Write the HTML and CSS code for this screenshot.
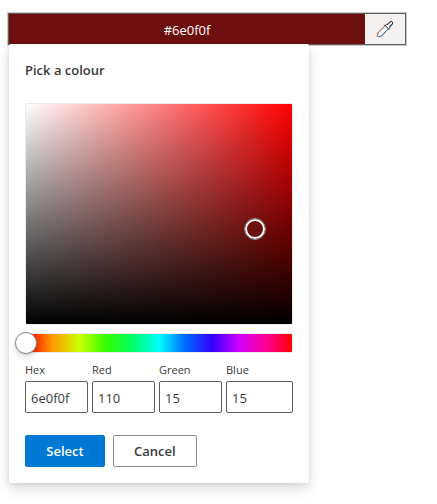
FILE: index.html
```html
<!DOCTYPE html>
<html lang="en">
<head>
<meta charset="utf-8">
<title>Colour picker</title>
<link rel="stylesheet" href="styles.css">
</head>
<body>
<div class="picker">
  <div class="field">
    <output class="field-value">#6e0f0f</output>
    <button class="field-button" type="button" aria-label="Pick a colour">
      <svg class="dropper" viewBox="0 0 18 18" aria-hidden="true">
        <path fill="#fff" stroke="none" d="M9.4 5.8 2.8 12.4 1.6 16.6 5.6 15.5 12.2 8.7Z"/>
        <path stroke="#e8832a" d="M9 5.4 2.2 12.2 1.1 15.2Q.9 16.6 2 17.2M11.8 3.8 14 1.4"/>
        <path stroke="#2f86d8" d="M12.4 9 5.8 15.7 3 16.9M14.4 6.4 16.8 4.2"/>
        <path stroke="#2b3350" stroke-width=".5" d="M9.4 5.8 2.8 12.4 1.6 15.4Q1.4 17 3 16.6L5.6 15.5 12.2 8.7"/>
        <path stroke="#1c2038" d="M8.3 4.7 13.3 9.7M9.3 5.3 10.6 4.3 12 4.3 14 2Q15.2 1 16.3 1.8Q17.2 2.8 16.2 4.1L13.8 6.1 13.8 7.5 12.9 8.9"/>
      </svg>
    </button>
  </div>
  <form class="panel">
    <h1 class="title">Pick a colour</h1>
    <div class="spectrum"><span class="spectrum-thumb"></span></div>
    <input class="hue" type="range" min="0" max="359" value="0" aria-label="Hue">
    <div class="channels">
      <div class="channel"><label for="hex">Hex</label><input id="hex" type="text" value="6e0f0f"></div>
      <div class="channel"><label for="red">Red</label><input id="red" type="text" value="110"></div>
      <div class="channel"><label for="green">Green</label><input id="green" type="text" value="15"></div>
      <div class="channel"><label for="blue">Blue</label><input id="blue" type="text" value="15"></div>
    </div>
    <div class="actions">
      <button class="button primary" type="button">Select</button>
      <button class="button" type="button">Cancel</button>
    </div>
  </form>
</div>
</body>
</html>
```
FILE: styles.css
```css
* {
  box-sizing: border-box;
}

body {
  margin: 0;
  padding: 13px 31px 20px 8px;
  background: #fff;
  color: #3b3a39;
  font: 13px/20px "Open Sans", "Noto Sans", sans-serif;
}

button,
input {
  font: inherit;
  color: inherit;
}

.field {
  display: flex;
  height: 32px;
  border: 1px solid #605e5c;
  outline: 1px solid #c8c8c8;
}

.field-value {
  flex: 1;
  background: #6e0f0f;
  color: #fff;
  line-height: 32px;
  text-align: center;
}

.field-button {
  display: flex;
  align-items: center;
  justify-content: center;
  width: 40px;
  padding: 0;
  border: 0;
  background: #f3f2f1;
}

.dropper {
  width: 18px;
  height: 18px;
  fill: none;
  stroke-width: 1;
}

.panel {
  position: relative;
  width: 300px;
  margin: -1px 0 0 1px;
  padding: 16px;
  border-radius: 2px;
  background: #fff;
  box-shadow: 0 6px 14px rgba(0, 0, 0, 0.13), 0 1px 4px rgba(0, 0, 0, 0.11);
}

.title {
  margin: 0 0 23px;
  font-size: 13px;
  font-weight: 600;
  line-height: 20px;
}

.spectrum {
  position: relative;
  height: 222px;
  margin-bottom: 8px;
  border: 1px solid #edebe9;
  border-radius: 2px;
  background:
    linear-gradient(to bottom, transparent, #000),
    linear-gradient(to right, #fff, #f00);
}

.spectrum-thumb {
  position: absolute;
  top: 57%;
  left: 86%;
  width: 22px;
  height: 22px;
  margin: -11px;
  border: 1px solid #8a8886;
  border-radius: 50%;
  background: #6e0f0f;
  box-shadow: inset 0 0 0 2px #fff;
}

.hue {
  display: block;
  appearance: none;
  width: 100%;
  height: 20px;
  margin: 0 0 8px;
  border: 1px solid #edebe9;
  border-radius: 2px;
  background: linear-gradient(to right, #f00 0%, #f90 10%, #cdff00 20%, #35ff00 30%, #0f6 40%, #00fffd 50%, #06f 60%, #3200ff 70%, #cd00ff 80%, #f09 90%, #f00 100%);
}

.hue::-webkit-slider-thumb {
  appearance: none;
  width: 22px;
  height: 22px;
  margin-left: -11px;
  border: 1px solid #8a8886;
  border-radius: 50%;
  background: #fff;
  box-shadow: 0 3px 7px rgba(0, 0, 0, 0.13), 0 1px 2px rgba(0, 0, 0, 0.11);
}

.channels {
  display: grid;
  grid-template-columns: repeat(4, 1fr);
}

.channel {
  padding-right: 4px;
}

.channel:last-child {
  padding-right: 0;
}

.channel label {
  display: block;
  padding-bottom: 2px;
  font-size: 11px;
  line-height: 18px;
}

.channel input {
  display: block;
  width: 100%;
  height: 32px;
  padding: 2px 5px 0;
  border: 1px solid #605e5c;
  border-radius: 2px;
  background: #fff;
}

.actions {
  display: flex;
  gap: 8px;
  margin-top: 22px;
}

.button {
  height: 32px;
  min-width: 80px;
  padding: 0 20px;
  border: 1px solid #8a8886;
  border-radius: 2px;
  background: #fff;
  font-weight: 600;
}

.primary {
  border-color: #0078d4;
  background: #0078d4;
  color: #fff;
}
```
